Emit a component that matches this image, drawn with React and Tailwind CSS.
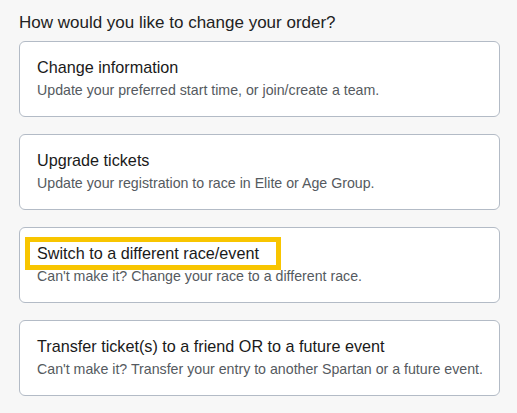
const options = [
  {
    title: 'Change information',
    desc: 'Update your preferred start time, or join/create a team.',
  },
  {
    title: 'Upgrade tickets',
    desc: 'Update your registration to race in Elite or Age Group.',
  },
  {
    title: 'Switch to a different race/event',
    desc: "Can't make it? Change your race to a different race.",
    highlight: true,
  },
  {
    title: 'Transfer ticket(s) to a friend OR to a future event',
    desc: "Can't make it? Transfer your entry to another Spartan or a future event.",
  },
];

function OptionCard({ title, desc, highlight }) {
  return (
    <div className="bg-white border border-[#b3bbc6] rounded-[6px] pl-[17px] pr-2 pt-[15px] pb-[17px]">
      <div className="relative">
        <div className="text-[16.2px] leading-[20px] text-[#1a1a1a] whitespace-nowrap">{title}</div>
        {highlight && (
          <div className="absolute left-[-12px] top-[-6px] w-[256px] h-[33px] border-[5px] border-[#f8c500] pointer-events-none" />
        )}
      </div>
      <div className="mt-1 text-[14.2px] leading-[18px] text-[#555a60] whitespace-nowrap">{desc}</div>
    </div>
  );
}

export default function App() {
  return (
    <div
      className="min-h-[413px] w-[517px] bg-[#f7f7f7] pl-[19px] pr-[17px] pt-[12px]"
      style={{ fontFamily: '"Liberation Sans", Arial, sans-serif' }}
    >
      <h2 className="text-[17px] leading-[22px] text-[#222] mb-[7px]">
        How would you like to change your order?
      </h2>
      <div className="flex flex-col gap-[17px]">
        {options.map((o) => (
          <OptionCard key={o.title} {...o} />
        ))}
      </div>
    </div>
  );
}
